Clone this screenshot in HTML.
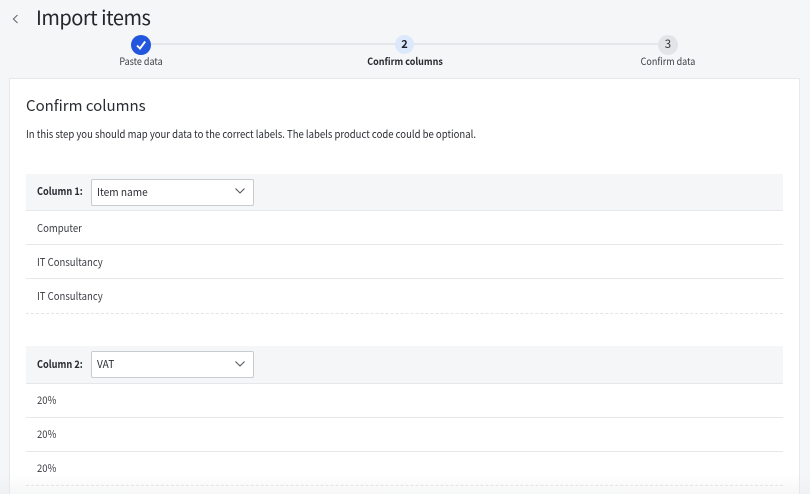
<!DOCTYPE html>
<html><head><meta charset="utf-8">
<style>
html,body{margin:0;padding:0;width:810px;height:494px;overflow:hidden}
body{position:relative;background:#f5f6f8;font-family:"Noto Sans CJK SC","Liberation Sans",sans-serif;color:#2a2d33}
.t{position:absolute;white-space:nowrap;line-height:16px;font-size:10.5px;transform-origin:left center;transform:scaleX(.908);filter:blur(.25px)}
.s{font-size:10px;transform-origin:center center;transform:translateX(-50%) scaleX(.9)}
.l{transform:scaleX(.875);font-weight:bold;color:#26292e}
.v{font-size:11px;transform:scaleX(.92);color:#2a2d33}
.b{position:absolute;box-sizing:border-box}
.line{position:absolute;left:26px;width:757px;height:1px;background:#e6e7e9}
.dash{position:absolute;left:26px;width:757px;height:0;border-top:1px dashed #e3e4e6}
.head{position:absolute;left:26px;width:757px;background:#f5f6f8}
.sel{position:absolute;left:91px;width:163px;box-sizing:border-box;background:#fff;border:1px solid #c8cbcf;border-radius:2px}
</style></head><body>
<svg class="b" style="left:10px;top:13px" width="10" height="12" viewBox="0 0 10 12"><path d="M7.5 2 L3.4 6 L7.5 10" fill="none" stroke="#666a70" stroke-width="1.1"/></svg>
<div class="t" style="left:36px;top:4px;font-size:20px;line-height:26px;letter-spacing:-.5px;transform:none;color:#24272c">Import items</div>

<div class="b" style="left:141px;top:43px;width:528px;height:2px;background:#e5e6e9"></div>
<div class="b" style="left:131px;top:35px;width:20px;height:20px;border-radius:50%;background:#2257dd"></div>
<svg class="b" style="left:131px;top:35px" width="20" height="20" viewBox="0 0 20 20"><path d="M6 10.5 L9 13.5 L14.2 6.5" fill="none" stroke="#fff" stroke-width="1.9"/></svg>
<div class="t s" style="left:141px;top:53px;color:#3a3d43">Paste data</div>

<div class="b" style="left:395px;top:35px;width:19px;height:19px;border-radius:50%;background:#dce8fb"></div>
<div class="t" style="left:404.5px;top:36px;font-size:11px;transform:translateX(-50%);font-weight:bold;color:#1e2126">2</div>
<div class="t s" style="left:404.5px;top:53px;font-weight:bold;color:#26292e">Confirm columns</div>

<div class="b" style="left:658px;top:35px;width:20px;height:20px;border-radius:50%;background:#e3e4e7"></div>
<div class="t" style="left:668px;top:36px;font-size:11.5px;transform:translateX(-50%);color:#33363b">3</div>
<div class="t s" style="left:668px;top:53px;color:#3a3d43">Confirm data</div>

<div class="b" style="left:9px;top:78px;width:791px;height:416px;background:#fff;border:1px solid #e7e8ea;border-bottom:0"></div>

<div class="t" style="left:26px;top:96px;font-size:15px;line-height:20px;transform:none;color:#2a2d33">Confirm columns</div>
<div class="t" style="left:26px;top:127px;color:#2a2d33">In this step you should map your data to the correct labels. The labels product code could be optional.</div>

<div class="head" style="top:174px;height:37px"></div>
<div class="line" style="top:210px"></div>
<div class="t l" style="left:37px;top:184px">Column 1:</div>
<div class="sel" style="top:179px;height:27px"></div>
<div class="t v" style="left:97px;top:184px">Item name</div>
<svg class="b" style="left:234px;top:186px" width="12" height="10" viewBox="0 0 12 10"><path d="M1.5 2.5 L6 7 L10.5 2.5" fill="none" stroke="#54585e" stroke-width="1.1"/></svg>
<div class="t" style="left:37px;top:221px;color:#3a3d43">Computer</div>
<div class="line" style="top:244px"></div>
<div class="t" style="left:37px;top:255px;color:#3a3d43">IT Consultancy</div>
<div class="line" style="top:278px"></div>
<div class="t" style="left:37px;top:289px;color:#3a3d43">IT Consultancy</div>
<div class="dash" style="top:313px"></div>

<div class="head" style="top:346px;height:38px"></div>
<div class="line" style="top:383px"></div>
<div class="t l" style="left:37px;top:357px">Column 2:</div>
<div class="sel" style="top:351px;height:27px"></div>
<div class="t v" style="left:97px;top:356px">VAT</div>
<svg class="b" style="left:234px;top:359px" width="12" height="10" viewBox="0 0 12 10"><path d="M1.5 2.5 L6 7 L10.5 2.5" fill="none" stroke="#54585e" stroke-width="1.1"/></svg>
<div class="t" style="left:37px;top:393px;color:#3a3d43">20%</div>
<div class="line" style="top:417px"></div>
<div class="t" style="left:37px;top:427px;color:#3a3d43">20%</div>
<div class="line" style="top:451px"></div>
<div class="t" style="left:37px;top:461px;color:#3a3d43">20%</div>
<div class="dash" style="top:485px"></div>

<div class="b" style="left:0;top:474px;width:810px;height:20px;background:linear-gradient(to bottom,rgba(230,231,234,0),rgba(230,231,234,.35))"></div>
</body></html>
